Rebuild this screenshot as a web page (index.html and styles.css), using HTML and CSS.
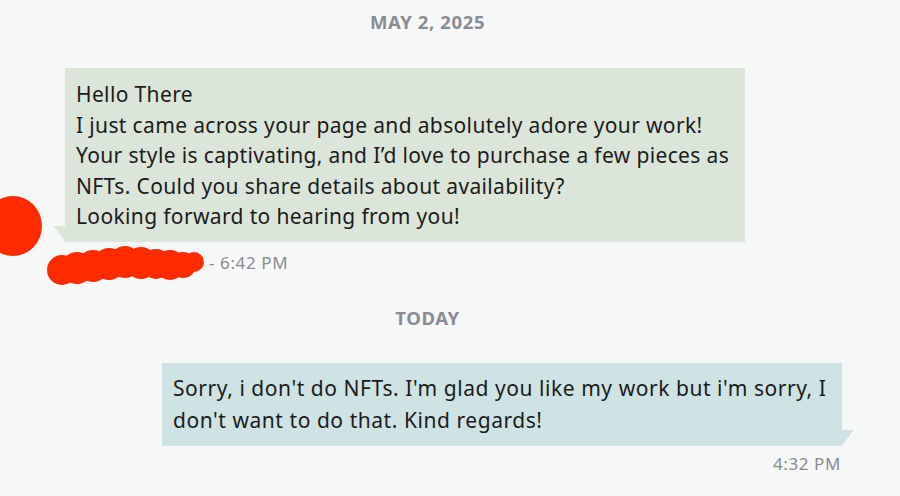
FILE: index.html
```html
<!DOCTYPE html>
<html>
<head>
<meta charset="utf-8">
<link rel="stylesheet" href="styles.css">
</head>
<body>
<div class="chat">
  <div class="day">MAY 2, 2025</div>
  <div class="group-in">
    <svg class="avatar" width="60" height="62" viewBox="0 0 60 62"><ellipse cx="30" cy="31" rx="29" ry="30" fill="#ff2b00"/></svg>
    <div class="bubble bubble-in">
      <div>Hello There</div>
      <div>I just came across your page and absolutely adore your work!</div>
      <div>Your style is captivating, and I’d love to purchase a few pieces as</div>
      <div>NFTs. Could you share details about availability?</div>
      <div>Looking forward to hearing from you!</div>
    </div>
    <div class="meta-in">
      <svg class="scribble" width="160" height="42" viewBox="0 0 160 42">
        <g fill="#ff2b00">
          <circle cx="15" cy="26" r="15"/>
          <circle cx="30" cy="24" r="16"/>
          <circle cx="46" cy="22" r="16"/>
          <circle cx="62" cy="20" r="16"/>
          <circle cx="78" cy="18" r="16"/>
          <circle cx="94" cy="19" r="16"/>
          <circle cx="109" cy="20" r="15"/>
          <circle cx="123" cy="21" r="15"/>
          <circle cx="136" cy="21" r="13"/>
          <circle cx="147" cy="18" r="10"/>
        </g>
      </svg>
      <span class="time">- 6:42 PM</span>
    </div>
  </div>
  <div class="day day-today">TODAY</div>
  <div class="group-out">
    <div class="bubble bubble-out">
      <div>Sorry, i don't do NFTs. I'm glad you like my work but i'm sorry, I don't want to do that. Kind regards!</div>
    </div>
    <div class="meta-out"><span class="time">4:32 PM</span></div>
  </div>
</div>
</body>
</html>
```
FILE: styles.css
```css
* { box-sizing: border-box; }
html, body { margin: 0; padding: 0; }
body {
  background: #f6f7f7;
  font-family: "Noto Sans", "Open Sans", sans-serif;
  color: #1b1b1b;
  width: 900px;
  height: 496px;
  overflow: hidden;
}
.chat { display: flex; flex-direction: column; padding-top: 11px; }
.day {
  text-align: center;
  font-weight: 700;
  font-size: 18.5px;
  line-height: 22px;
  letter-spacing: 0.6px;
  color: #8b8b93;
  padding-right: 45px;
}
.group-in { position: relative; margin-top: 35px; }
.avatar { position: absolute; left: -17px; top: 127px; }
.bubble {
  position: relative;
  font-size: 21px;
  line-height: 30.5px;
}
.bubble-in {
  margin-left: 65px;
  width: 680px;
  background: #dbe5d9;
  padding: 11px 11px 10px;
  letter-spacing: 0.36px;
}
.bubble-in::before {
  content: "";
  position: absolute;
  left: -12px;
  bottom: 0;
  width: 12px;
  height: 16px;
  background: #dbe5d9;
  clip-path: polygon(0 0, 100% 0, 100% 100%);
}
.meta-in {
  display: flex;
  align-items: center;
  margin-left: 47px;
  margin-top: 2px;
  height: 42px;
}
.scribble { display: block; }
.time {
  font-size: 17px;
  letter-spacing: 0.6px;
  color: #8a8b90;
  line-height: 20px;
}
.meta-in .time { margin-left: 2px; margin-top: -4px; }
.day-today { margin-top: 21px; }
.group-out { margin-top: 34px; }
.bubble-out {
  margin-left: 162px;
  width: 680px;
  background: #cfe2e4;
  padding: 9px 6px 10px 11px;
  line-height: 32px;
  letter-spacing: 0.55px;
}
.bubble-out::after {
  content: "";
  position: absolute;
  right: -12px;
  bottom: 0;
  width: 12px;
  height: 16px;
  background: #cfe2e4;
  clip-path: polygon(0 0, 100% 0, 0 100%);
}
.meta-out {
  width: 841px;
  text-align: right;
  margin-top: 7px;
}
```
